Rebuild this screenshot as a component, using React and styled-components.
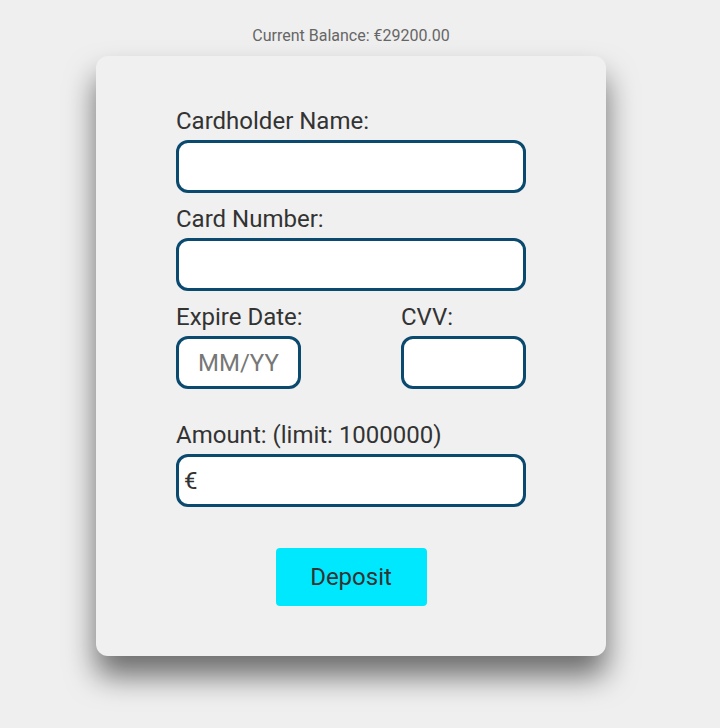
import styled, { createGlobalStyle } from 'styled-components';

const GlobalStyle = createGlobalStyle`
	html, body {
		margin: 0;
		padding: 0;
		background: #efefef;
		font-family: Roboto, "Liberation Sans", sans-serif;
	}
`;

const Page = styled.div`
	width: 702px;
	display: flex;
	flex-direction: column;
	align-items: center;
	padding-top: 26px;
	padding-bottom: 72px;
`;

const Balance = styled.div`
	font-size: 16px;
	line-height: 19px;
	color: #666;
	margin-bottom: 11px;
`;

const Card = styled.form`
	width: 510px;
	box-sizing: border-box;
	padding: 51px 80px 50px;
	background: #f0f0f0;
	border-radius: 12px;
	box-shadow: 0 20px 30px rgba(0, 0, 0, 0.55);
	display: flex;
	flex-direction: column;
`;

const Field = styled.div`
	display: flex;
	flex-direction: column;
	margin-top: ${(p) => p.$gap || 0}px;
	position: relative;
`;

const Label = styled.label`
	font-size: 24px;
	line-height: 28px;
	color: #333;
	margin-bottom: 5px;
`;

const Input = styled.input`
	box-sizing: border-box;
	width: ${(p) => p.$width || 350}px;
	height: 53px;
	border: 3px solid #0b4a6f;
	border-radius: 12px;
	background: #fff;
	font-family: inherit;
	font-size: 24px;
	color: #333;
	padding: ${(p) => (p.$prefix ? '0 8px 0 28px' : '0 12px')};
	text-align: ${(p) => (p.$center ? 'center' : 'left')};
	outline: none;

	&::placeholder {
		color: #777;
	}
`;

const Row = styled.div`
	display: flex;
	justify-content: space-between;
	margin-top: 12px;
`;

const Prefix = styled.span`
	position: absolute;
	left: 8px;
	bottom: 12px;
	font-size: 24px;
	line-height: 28px;
	color: #333;
`;

const Button = styled.button`
	align-self: center;
	margin-top: 41px;
	width: 151px;
	height: 58px;
	border: none;
	border-radius: 4px;
	background: #00e8fe;
	color: #333;
	font-family: inherit;
	font-size: 24px;
	cursor: pointer;
`;

export default function App() {
	return (
		<>
			<GlobalStyle />
			<Page>
				<Balance>Current Balance: €29200.00</Balance>
				<Card onSubmit={(e) => e.preventDefault()}>
					<Field>
						<Label>Cardholder Name:</Label>
						<Input type="text" />
					</Field>
					<Field $gap={12}>
						<Label>Card Number:</Label>
						<Input type="text" />
					</Field>
					<Row>
						<Field>
							<Label>Expire Date:</Label>
							<Input type="text" $width={125} $center placeholder="MM/YY" />
						</Field>
						<Field>
							<Label>CVV:</Label>
							<Input type="text" $width={125} />
						</Field>
					</Row>
					<Field $gap={32}>
						<Label>Amount: (limit: 1000000)</Label>
						<Input type="text" $prefix />
						<Prefix>€</Prefix>
					</Field>
					<Button type="submit">Deposit</Button>
				</Card>
			</Page>
		</>
	);
}
